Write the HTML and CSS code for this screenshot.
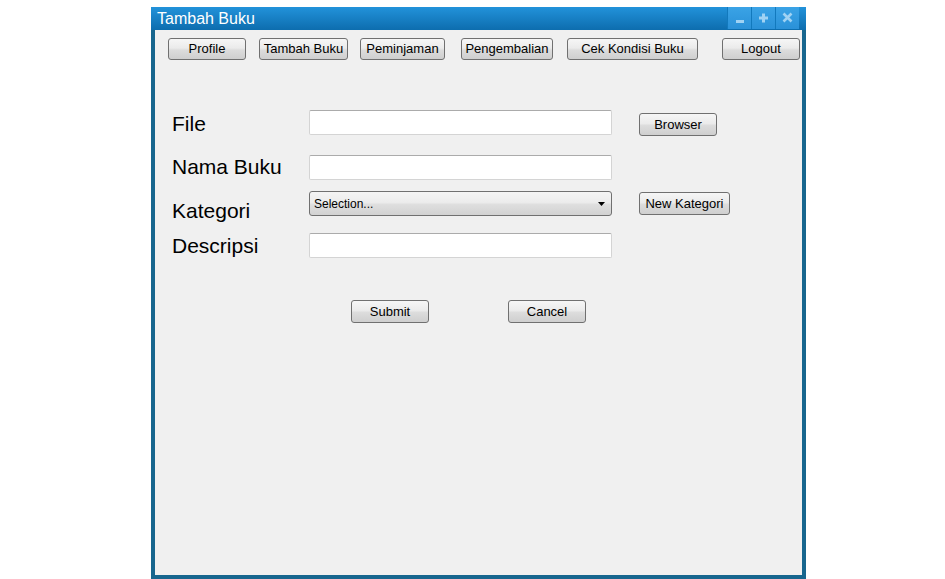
FILE: index.html
```html
<!DOCTYPE html>
<html>
<head>
<meta charset="utf-8">
<title>Tambah Buku</title>
<link rel="stylesheet" href="styles.css">
</head>
<body>
<div class="window">
  <div class="titlebar">
    <span class="title">Tambah Buku</span>
    <div class="controls">
      <span class="ctrl"><svg width="23" height="22" viewBox="0 0 23 22"><rect x="8" y="13" width="8" height="3" fill="#9fd2f3"/></svg></span>
      <span class="ctrl"><svg width="23" height="22" viewBox="0 0 23 22"><rect x="7" y="9.5" width="9" height="3" fill="#9fd2f3"/><rect x="10" y="6.5" width="3" height="9" fill="#9fd2f3"/></svg></span>
      <span class="ctrl"><svg width="23" height="22" viewBox="0 0 23 22"><path d="M7.5 6.5 L15.5 14.5 M15.5 6.5 L7.5 14.5" stroke="#9fd2f3" stroke-width="2.6"/></svg></span>
    </div>
  </div>
  <div class="body">
    <nav class="nav">
      <button class="btn nav-profile">Profile</button>
      <button class="btn nav-tambah">Tambah Buku</button>
      <button class="btn nav-pinjam">Peminjaman</button>
      <button class="btn nav-kembali">Pengembalian</button>
      <button class="btn nav-cek">Cek Kondisi Buku</button>
      <button class="btn nav-logout">Logout</button>
    </nav>
    <form class="form">
      <div class="row row-file">
        <label class="label">File</label>
        <input class="input" type="text">
        <button type="button" class="btn side-btn btn-browser">Browser</button>
      </div>
      <div class="row row-nama">
        <label class="label">Nama Buku</label>
        <input class="input" type="text">
      </div>
      <div class="row row-kategori">
        <label class="label">Kategori</label>
        <div class="select"><span>Selection...</span><svg class="caret" width="7" height="4" viewBox="0 0 7 4"><path d="M0 0 H7 L3.5 4 Z" fill="#000"/></svg></div>
        <button type="button" class="btn side-btn btn-newkat">New Kategori</button>
      </div>
      <div class="row row-desc">
        <label class="label">Descripsi</label>
        <input class="input" type="text">
      </div>
      <div class="actions">
        <button type="button" class="btn btn-submit">Submit</button>
        <button type="button" class="btn btn-cancel">Cancel</button>
      </div>
    </form>
  </div>
</div>
</body>
</html>
```
FILE: styles.css
```css
html, body {
  margin: 0;
  padding: 0;
  background: #ffffff;
}

body {
  font-family: "Liberation Sans", Arial, sans-serif;
}

.window {
  margin: 7px 0 0 151px;
  width: 655px;
  height: 572px;
  background: #17668e;
  display: flex;
  flex-direction: column;
}

.titlebar {
  height: 23px;
  background: linear-gradient(#2292da, #0d6dae);
  display: flex;
  align-items: flex-start;
  justify-content: space-between;
}

.title {
  color: #ffffff;
  font-size: 16px;
  line-height: 23px;
  padding-left: 6px;
}

.controls {
  display: flex;
  margin-right: 7px;
}

.ctrl {
  width: 23px;
  height: 22px;
  background: linear-gradient(#3aa3e6, #2a91d8);
  border-left: 1px solid #1279bd;
  display: block;
}

.ctrl svg {
  display: block;
}

.body {
  flex: 1;
  margin: 0 4px 4px 4px;
  background: #f0f0f0;
}

.btn {
  box-sizing: border-box;
  height: 23px;
  padding: 0;
  border: 1px solid #707070;
  border-radius: 3px;
  background: linear-gradient(#f6f6f6 0%, #ebebeb 45%, #dcdcdc 55%, #cfcfcf 100%);
  font-family: "Liberation Sans", Arial, sans-serif;
  font-size: 13px;
  color: #000;
  line-height: 21px;
  text-align: center;
}

.nav {
  display: flex;
  padding: 8px 0 0 13px;
}

.nav .btn { height: 22px; line-height: 20px; }

.nav-profile { width: 78px; }
.nav-tambah { width: 89px; margin-left: 13px; }
.nav-pinjam { width: 85px; margin-left: 12px; }
.nav-kembali { width: 92px; margin-left: 16px; }
.nav-cek { width: 131px; margin-left: 14px; }
.nav-logout { width: 78px; margin-left: 24px; }

.form {
  margin: 50px 0 0 0;
  padding-left: 17px;
}

.row {
  display: flex;
  align-items: flex-start;
  height: 25px;
}

.row-nama { margin-top: 20px; }
.row-kategori { margin-top: 11px; }
.row-desc { margin-top: 17px; }

.label {
  width: 137px;
  font-size: 21px;
  line-height: 25px;
  color: #000;
}

.row-file .label { margin-top: 1px; }
.row-nama .label { margin-top: -1px; }
.row-kategori .label { margin-top: 7px; }
.row-desc .label { margin-top: 0; }

.input {
  box-sizing: border-box;
  width: 303px;
  height: 25px;
  margin: 0;
  border: 1px solid #d4d4d4;
  border-top-color: #ababab;
  border-radius: 2px;
  background: #ffffff;
  padding: 0 4px;
}

.select {
  box-sizing: border-box;
  width: 303px;
  height: 25px;
  border: 1px solid #707070;
  border-radius: 3px;
  background: linear-gradient(#f4f4f4 0%, #ececec 45%, #dedede 55%, #d2d2d2 100%);
  display: flex;
  align-items: center;
  justify-content: space-between;
  padding: 0 6px 0 4px;
  font-size: 12px;
  color: #000;
}

.caret { display: block; }

.side-btn { margin-left: 27px; }

.btn-browser { width: 78px; margin-top: 3px; }
.btn-newkat { width: 91px; margin-top: 1px; }

.actions {
  display: flex;
  margin-top: 42px;
  padding-left: 179px;
}

.btn-submit { width: 78px; }
.btn-cancel { width: 78px; margin-left: 79px; }
```
